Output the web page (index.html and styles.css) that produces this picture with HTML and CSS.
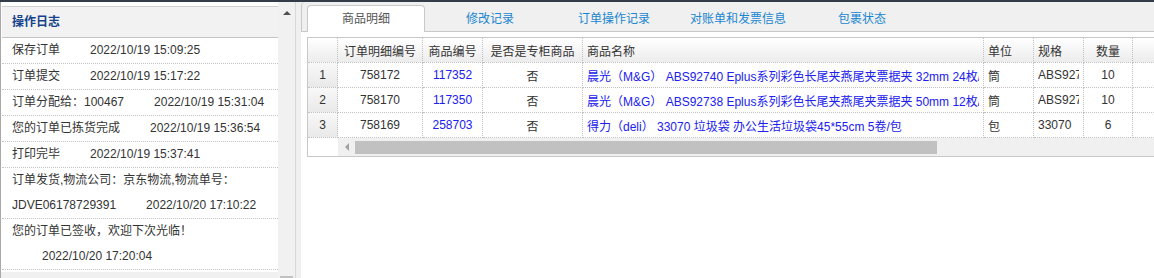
FILE: index.html
```html
<!DOCTYPE html>
<html lang="zh-CN">
<head>
  <meta charset="UTF-8">
  <title>订单详情</title>
  <link rel="stylesheet" href="styles.css">
</head>
<body>
  <div class="topbar"></div>

  <div class="layout">

    <!-- Operation log on the left -->
    <aside class="log">
      <div class="log-panel">
        <div class="log-inner">
          <div class="log-head">操作日志</div>
          <ul class="log-list">
            <li>保存订单<span class="time">2022/10/19 15:09:25</span></li>
            <li>订单提交<span class="time">2022/10/19 15:17:22</span></li>
            <li>订单分配给：100467<span class="time">2022/10/19 15:31:04</span></li>
            <li>您的订单已拣货完成<span class="time">2022/10/19 15:36:54</span></li>
            <li>打印完毕<span class="time">2022/10/19 15:37:41</span></li>
            <li>订单发货,物流公司：京东物流,物流单号：<br>JDVE06178729391<span class="time">2022/10/20 17:10:22</span></li>
            <li>您的订单已签收，欢迎下次光临！<br><span class="time">2022/10/20 17:20:04</span></li>
          </ul>
        </div>
      </div>
      <div class="vscroll">
        <span class="arrow-up"></span>
        <span class="vthumb"></span>
      </div>
    </aside>

    <!-- Order detail tabs -->
    <main class="detail">
      <div class="tabs">
        <div class="tab active">商品明细</div>
        <div class="tab">修改记录</div>
        <div class="tab">订单操作记录</div>
        <div class="tab">对账单和发票信息</div>
        <div class="tab">包裹状态</div>
      </div>

      <div class="tab-body">
        <div class="grid">
          <table>
            <colgroup>
              <col class="c-num">
              <col class="c-id">
              <col class="c-code">
              <col class="c-flag">
              <col class="c-name">
              <col class="c-unit">
              <col class="c-spec">
              <col class="c-qty">
              <col class="c-more">
            </colgroup>
            <thead>
              <tr>
                <th class="num"></th>
                <th>订单明细编号</th>
                <th>商品编号</th>
                <th>是否是专柜商品</th>
                <th class="left">商品名称</th>
                <th class="left">单位</th>
                <th class="left">规格</th>
                <th>数量</th>
                <th></th>
              </tr>
            </thead>
            <tbody>
              <tr>
                <td class="num">1</td>
                <td>758172</td>
                <td class="link">117352</td>
                <td>否</td>
                <td class="left link"><div class="clip">晨光（M&amp;G） ABS92740 Eplus系列彩色长尾夹燕尾夹票据夹 32mm 24枚/筒</div></td>
                <td class="left">筒</td>
                <td class="left"><div class="clip">ABS92740</div></td>
                <td>10</td>
                <td></td>
              </tr>
              <tr>
                <td class="num">2</td>
                <td>758170</td>
                <td class="link">117350</td>
                <td>否</td>
                <td class="left link"><div class="clip">晨光（M&amp;G） ABS92738 Eplus系列彩色长尾夹燕尾夹票据夹 50mm 12枚/筒</div></td>
                <td class="left">筒</td>
                <td class="left"><div class="clip">ABS92738</div></td>
                <td>10</td>
                <td></td>
              </tr>
              <tr>
                <td class="num">3</td>
                <td>758169</td>
                <td class="link">258703</td>
                <td>否</td>
                <td class="left link"><div class="clip">得力（deli） 33070 垃圾袋 办公生活垃圾袋45*55cm 5卷/包</div></td>
                <td class="left">包</td>
                <td class="left">33070</td>
                <td>6</td>
                <td></td>
              </tr>
            </tbody>
          </table>

          <div class="hscroll">
            <div class="hscroll-gap"></div>
            <div class="hscroll-track">
              <span class="arrow-btn"><span class="arrow-left"></span></span>
              <span class="hthumb"></span>
            </div>
          </div>
        </div>
      </div>
    </main>

  </div>
</body>
</html>
```

FILE: styles.css
```css
/* Page basics */
html, body {
  margin: 0;
  padding: 0;
  height: 278px;
  overflow: hidden;
}

body {
  background-color: #f0f0f0;
  font-family: "Liberation Sans", "Noto Sans CJK SC", sans-serif;
  font-size: 12px;
  color: #333;
}

.topbar {
  height: 2px;
  background-color: #333c48;
}

.layout {
  display: flex;
  height: 276px;
}

/* Left: operation log */
.log {
  display: flex;
  width: 296px;
  border-left: 1px solid #a8a8a8;
  border-right: 1px solid #d8d8d8;
  box-sizing: border-box;
}

.log-panel {
  width: 277px;
  background-color: #f0f0f0;
}

.log-inner {
  background-color: #fff;
  padding: 4px 0 2px 1px;
}

.log-head {
  height: 30px;
  line-height: 30px;
  padding-left: 10px;
  background-color: #f2f2f2;
  border-top: 1px solid #d0d0d0;
  border-bottom: 1px solid #c6c6c6;
  font-weight: bold;
  color: #15428b;
}

.log-list {
  list-style: none;
  margin: 0;
  padding: 0;
}

.log-list li {
  line-height: 25px;
  padding-left: 10px;
  border-bottom: 1px dotted #c4c4c4;
}

.time {
  display: inline-block;
  margin-left: 30px;
}

.vscroll {
  position: relative;
  width: 17px;
  background-color: #f1f1f1;
}

.arrow-up {
  position: absolute;
  top: 9px;
  left: 5px;
  border-left: 4px solid transparent;
  border-right: 4px solid transparent;
  border-bottom: 4px solid #505050;
}

.vthumb {
  position: absolute;
  bottom: 0;
  left: 2px;
  width: 13px;
  height: 2px;
  background-color: #c1c1c1;
}

/* Right: detail tabs */
.detail {
  flex: 1;
  display: flex;
  flex-direction: column;
  margin-left: 5px;
  min-width: 0;
}

.tabs {
  display: flex;
  align-items: flex-end;
  height: 29px;
  padding-left: 5px;
  border-left: 1px solid #c8c8c8;
  border-bottom: 1px solid #c8c8c8;
  border-top-left-radius: 4px;
}

.tab {
  box-sizing: border-box;
  width: 118px;
  height: 27px;
  line-height: 26px;
  margin-right: 6px;
  margin-bottom: -1px;
  text-align: center;
  color: #1a86d0;
  border: 1px solid transparent;
  border-bottom: none;
  border-radius: 4px 4px 0 0;
}

.tab.active {
  background-color: #fff;
  border-color: #c8c8c8;
  color: #555;
}

.tab-body {
  flex: 1;
  background-color: #fff;
  padding: 5px 0 0 6px;
  overflow: hidden;
}

/* Goods grid */
.grid {
  width: 880px;
  border: 1px solid #c8c8c8;
}

table {
  border-collapse: separate;
  border-spacing: 0;
  table-layout: fixed;
  width: 878px;
}

.c-num { width: 30px; }
.c-id { width: 85px; }
.c-code { width: 60px; }
.c-flag { width: 100px; }
.c-name { width: 401px; }
.c-unit { width: 50px; }
.c-spec { width: 50px; }
.c-qty { width: 49px; }

th, td {
  height: 24px;
  padding: 0 4px;
  border-right: 1px dotted #c0c0c0;
  border-bottom: 1px dotted #c0c0c0;
  text-align: center;
  white-space: nowrap;
  overflow: hidden;
  font-weight: normal;
}

.clip {
  overflow: hidden;
}

th {
  background: linear-gradient(#ffffff, #ececec);
}

td.num {
  background: linear-gradient(#f8f8f8, #e9e9e9);
}

.left {
  text-align: left;
}

.link {
  color: #2020ee;
}

.hscroll {
  display: flex;
  height: 18px;
}

.hscroll-gap {
  width: 30px;
  background-color: #fff;
}

.hscroll-track {
  flex: 1;
  display: flex;
  align-items: center;
  background-color: #f0f0f0;
}

.arrow-btn {
  width: 17px;
  height: 18px;
  display: flex;
  align-items: center;
  justify-content: center;
}

.arrow-left {
  border-top: 4px solid transparent;
  border-bottom: 4px solid transparent;
  border-right: 4px solid #a3a3a3;
}

.hthumb {
  width: 582px;
  height: 13px;
  background-color: #c1c1c1;
}
```
